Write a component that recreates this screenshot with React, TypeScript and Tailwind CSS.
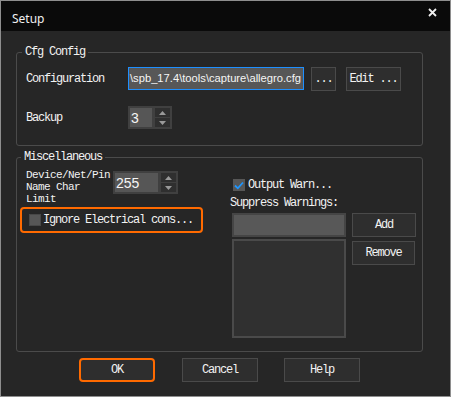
import React from "react";

const mono = "font-['Liberation_Mono',monospace] text-[12px] tracking-[-1.2px] leading-[12px] text-[#f2f2f2]";
const monoSm = "font-['Liberation_Mono',monospace] text-[11px] tracking-[-0.6px] leading-[12px] text-[#f2f2f2]";

function Spinner({ value, w }: { value: string; w: string }) {
  return (
    <div className={`${w} h-[23px] bg-[#404040] p-[2px] flex`}>
      <div className="flex-1 bg-[#565656] flex items-center pl-[1px] font-['Liberation_Sans',sans-serif] text-[14px] text-[#f5f5f5] leading-none">
        {value}
      </div>
      <div className="w-[15px] ml-[3px] flex flex-col justify-between">
        <div className="h-[9px] bg-[#2f2f2f] flex items-center justify-center">
          <svg width="7" height="4" viewBox="0 0 7 4"><path d="M3.5 0 L7 4 L0 4 Z" fill="#9a9a9a" /></svg>
        </div>
        <div className="h-[9px] bg-[#2f2f2f] flex items-center justify-center">
          <svg width="7" height="4" viewBox="0 0 7 4"><path d="M0 0 L7 0 L3.5 4 Z" fill="#9a9a9a" /></svg>
        </div>
      </div>
    </div>
  );
}

function Btn({ children, w, className = "" }: { children: React.ReactNode; w: string; className?: string }) {
  return (
    <div className={`${w} h-[24px] bg-[#2e2e2e] border border-[#4a4a4a] flex items-center justify-center ${mono} ${className}`}>
      {children}
    </div>
  );
}

export default function App() {
  return (
    <div className="w-[451px] h-[397px] border border-[#8e8e8e] bg-[#262626] flex flex-col overflow-hidden">
      {/* Title bar */}
      <div className="h-[30px] bg-[#0a0a0a] flex justify-between shrink-0">
        <div className="pl-[11px] pt-[11px] font-['Noto_Sans',sans-serif] text-[12px] leading-[14px] text-[#f0f0f0]">Setup</div>
        <div className="mt-[7px] mr-[13px]">
          <svg width="9" height="9" viewBox="0 0 9 9">
            <path d="M1 1 L8 8 M8 1 L1 8" stroke="#f0f0f0" strokeWidth="1.8" />
          </svg>
        </div>
      </div>

      {/* Body */}
      <div className="flex flex-col">
        <fieldset className="mt-[15px] ml-[15px] w-[407px] h-[100px] border border-[#4b4b4b] rounded-[3px] p-0">
          <legend className={`ml-[5px] px-[3px] ${mono}`}>Cfg Config</legend>
          <div className="mt-[9px] pl-[9px] flex items-center h-[23px]">
            <div className={`w-[102px] ${mono}`}>Configuration</div>
            <div className="w-[176px] h-[23px] bg-[#575757] border border-[#1e8fff] flex items-center pl-[1px] font-['Liberation_Sans',sans-serif] text-[11.2px] text-[#f5f5f5] whitespace-nowrap overflow-hidden">
              \spb_17.4\tools\capture\allegro.cfg
            </div>
            <Btn w="w-[25px]" className="ml-[7px] h-[23px]">...</Btn>
            <Btn w="w-[55px]" className="ml-[10px] h-[23px]">Edit ...</Btn>
          </div>
          <div className="mt-[16px] pl-[9px] flex items-center">
            <div className={`w-[102px] ${mono}`}>Backup</div>
            <Spinner value="3" w="w-[44px]" />
          </div>
        </fieldset>

        <fieldset className="mt-[5px] ml-[15px] w-[407px] h-[201px] border border-[#4b4b4b] rounded-[3px] p-0">
          <legend className={`ml-[4px] px-[3px] ${mono}`}>Miscellaneous</legend>
          <div className="flex">
            {/* left column */}
            <div className="w-[213px] flex flex-col">
              <div className="mt-[6px] flex items-start">
                <div className={`ml-[9px] w-[87px] ${monoSm}`}>
                  Device/Net/Pin<br />Name Char<br />Limit
                </div>
                <div className="mt-[2px]">
                  <Spinner value="255" w="w-[65px]" />
                </div>
              </div>
              <div className="mt-[2px] ml-[3px] w-[183px] h-[26px] border-2 border-[#ff6a00] rounded-[4px] flex items-center pl-[7px]">
                <div className="w-[12px] h-[12px] bg-[#575757] border border-[#484848]" />
                <div className={`ml-[2px] ${mono}`}>Ignore Electrical cons...</div>
              </div>
            </div>
            {/* right column */}
            <div className="flex flex-col">
              <div className="mt-[16px] ml-[3px] flex items-center">
                <div className="w-[12px] h-[12px] bg-[#575757] flex items-center justify-center">
                  <svg width="10" height="9" viewBox="0 0 10 9">
                    <path d="M1 4.5 L3.8 7.3 L9 1.5" stroke="#1e96ff" strokeWidth="1.8" fill="none" />
                  </svg>
                </div>
                <div className={`ml-[3px] ${mono}`}>Output Warn...</div>
              </div>
              <div className={`mt-[6px] ${mono}`}>Suppress Warnings:</div>
              <div className="mt-[4px] ml-[2px] flex">
                <div className="w-[114px] flex flex-col">
                  <div className="h-[24px] bg-[#585858] border-2 border-[#454545]" />
                  <div className="mt-[2px] h-[99px] bg-[#303030] border-2 border-[#4a4a4a]" />
                </div>
                <div className="ml-[6px] flex flex-col">
                  <Btn w="w-[64px]">Add</Btn>
                  <Btn w="w-[63px]" className="mt-[4px]">Remove</Btn>
                </div>
              </div>
            </div>
          </div>
        </fieldset>

        <div className="mt-[6px] ml-[78px] flex">
          <Btn w="w-[76px]" className="border-2 border-[#ff6a00] rounded-[4px]">OK</Btn>
          <Btn w="w-[76px]" className="ml-[27px]">Cancel</Btn>
          <Btn w="w-[76px]" className="ml-[26px]">Help</Btn>
        </div>
      </div>
    </div>
  );
}
